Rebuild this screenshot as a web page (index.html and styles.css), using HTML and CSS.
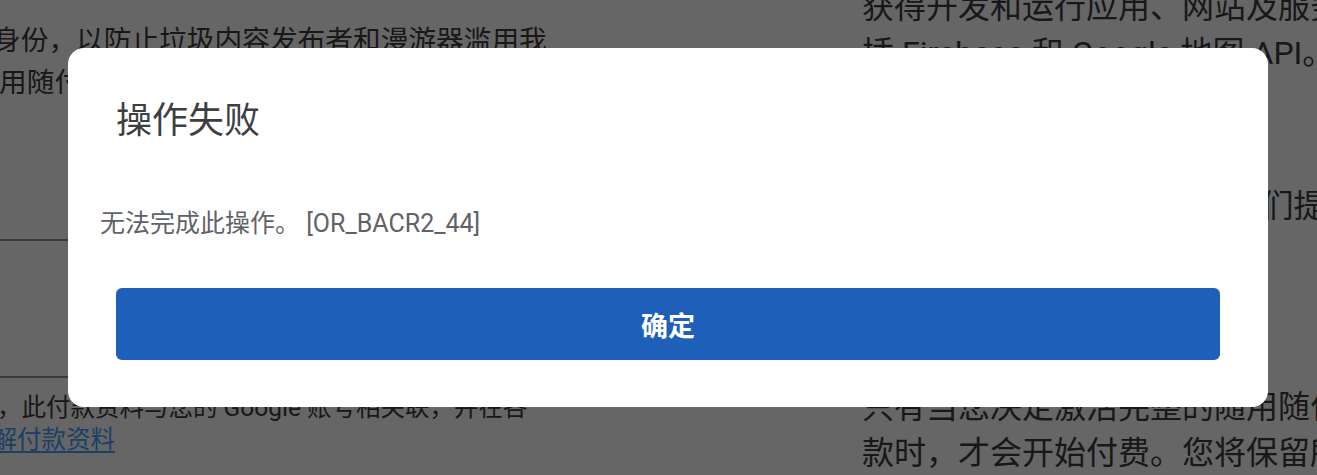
FILE: index.html
```html
<!DOCTYPE html>
<html lang="zh-CN">
<head>
<meta charset="utf-8">
<title>操作失败</title>
<link rel="stylesheet" href="styles.css">
</head>
<body>
<div class="page">
  <div class="col-left">
    <div class="para-a">
      <div class="line line-a1">身份，以防止垃圾内容发布者和漫游器滥用我</div>
      <div class="line line-a2">用随付款结算账号时，我们会要求您提供付款资料</div>
    </div>
    <div class="rule rule-1"></div>
    <div class="rule rule-2"></div>
    <div class="para-b">
      <div class="line line-b1">，此付款资料与您的 Google 账号相关联，并在各</div>
      <div class="line line-b2">了<a class="link" href="#">解付款资料</a></div>
    </div>
  </div>
  <div class="col-right">
    <div class="para-r1">
      <div class="line">获得开发和运行应用、网站及服务所需的一切</div>
      <div class="line">插 Firebase 和 Google 地图 API。</div>
    </div>
    <div class="para-r2">
      <div class="line">为 Google Cloud 新用户，我们提供</div>
    </div>
    <div class="para-r3">
      <div class="line">只有当您决定激活完整的随用随付结算账号</div>
      <div class="line">款时，才会开始付费。您将保留所有资源</div>
    </div>
  </div>
</div>

<div class="overlay">
  <div class="dialog" role="dialog">
    <h2 class="dialog-title">操作失败</h2>
    <p class="dialog-body">无法完成此操作。 [OR_BACR2_44]</p>
    <button class="dialog-btn" type="button">确定</button>
  </div>
</div>
</body>
</html>
```

FILE: styles.css
```css
* { box-sizing: border-box; }

html, body {
  margin: 0;
  padding: 0;
  background: #ffffff;
  width: 1317px;
  height: 475px;
  overflow: hidden;
}

body {
  font-family: Roboto, "Noto Sans CJK SC", sans-serif;
  color: #3c3c3c;
}

.page {
  display: flex;
  width: 1317px;
  height: 475px;
  overflow: hidden;
}

.line {
  white-space: nowrap;
}

/* left column */
.col-left {
  width: 560px;
  flex: 0 0 560px;
  overflow: hidden;
}

.para-a {
  margin-top: 20px;
  font-size: 27.7px;
  line-height: 42px;
}

.line-a1 { margin-left: -7px; }
.line-a2 { margin-left: -1px; }

.rule {
  height: 2px;
  background: #949494;
  width: 200px;
}

.rule-1 { margin-top: 135px; }
.rule-2 { margin-top: 135px; }

.para-b {
  margin-top: 14px;
  font-size: 24.5px;
  line-height: 32px;
}

.line-b1 { margin-left: -3px; }
.line-b2 { margin-left: -32px; }

.link {
  color: #4a9cff;
  text-decoration: underline;
  text-underline-offset: 3px;
}

/* right column */
.col-right {
  margin-left: 302px;
  flex: 1 1 auto;
  overflow: hidden;
  font-size: 32px;
  line-height: 46px;
}

.para-r1 { margin-top: -16px; }
.para-r2 { margin-top: 107px; }
.para-r3 { margin-top: 155px; }

/* modal */
.overlay {
  position: fixed;
  inset: 0;
  background: rgba(0, 0, 0, 0.6);
  display: flex;
  align-items: flex-start;
  justify-content: flex-start;
  padding: 48px 0 0 68px;
}

.dialog {
  width: 1200px;
  height: 359px;
  background: #ffffff;
  border-radius: 16px;
  padding: 47px 48px 47px 48px;
  display: flex;
  flex-direction: column;
}

.dialog-title {
  margin: 0;
  font-size: 36px;
  font-weight: 400;
  line-height: 52px;
  color: #3c4043;
}

.dialog-body {
  margin: 59px 0 0 -16px;
  font-size: 25px;
  line-height: 36px;
  color: #5f6368;
}

.dialog-btn {
  margin-top: 46px;
  height: 72px;
  width: 100%;
  border: none;
  border-radius: 6px;
  background: #1e5fba;
  color: #ffffff;
  font-family: Roboto, "Noto Sans CJK SC", sans-serif;
  font-size: 27px;
  font-weight: 700;
  cursor: pointer;
}
```
